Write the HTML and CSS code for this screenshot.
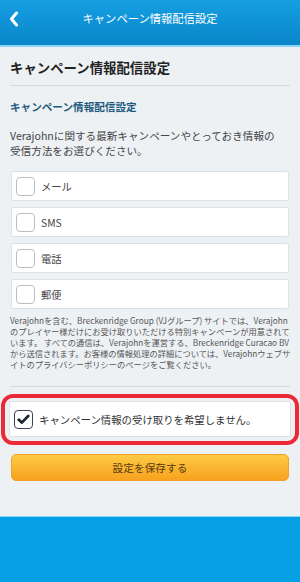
FILE: index.html
```html
<!DOCTYPE html>
<html lang="ja">
<head>
<meta charset="utf-8">
<title>キャンペーン情報配信設定</title>
<link rel="stylesheet" href="styles.css">
</head>
<body>
<header class="topbar">
  <a class="back" href="#" aria-label="戻る">
    <svg width="10" height="16" viewBox="0 0 10 16"><path d="M7.5 2 L2.5 8 L7.5 14" fill="none" stroke="#fff" stroke-width="3" stroke-linecap="round" stroke-linejoin="round"/></svg>
  </a>
  <h1 class="topbar-title">キャンペーン情報配信設定</h1>
</header>
<main class="content">
  <h2 class="page-title">キャンペーン情報配信設定</h2>
  <section class="settings">
    <h3 class="sub-title">キャンペーン情報配信設定</h3>
    <p class="lead">Verajohnに関する最新キャンペーンやとっておき情報の<br>受信方法をお選びください。</p>
    <ul class="options">
      <li class="option"><span class="cb"></span><span class="label">メール</span></li>
      <li class="option"><span class="cb"></span><span class="label">SMS</span></li>
      <li class="option"><span class="cb"></span><span class="label">電話</span></li>
      <li class="option"><span class="cb"></span><span class="label">郵便</span></li>
    </ul>
    <p class="note">Verajohnを含む、Breckenridge Group (VJグループ) サイトでは、Verajohn<br>のプレイヤー様だけにお受け取りいただける特別キャンペーンが用意されて<br>います。 すべての通信は、Verajohnを運営する、Breckenridge Curacao BV<br>から送信されます。お客様の情報処理の詳細については、Verajohnウェブサ<br>イトのプライバシーポリシーのページをご覧ください。</p>
    <div class="optout-wrap">
      <div class="option optout">
        <span class="cb checked">
          <svg width="13" height="11" viewBox="0 0 13 11"><path d="M1.8 5.8 L4.8 8.6 L11.2 2" fill="none" stroke="#1b2733" stroke-width="2.8" stroke-linecap="round" stroke-linejoin="round"/></svg>
        </span>
        <span class="label">キャンペーン情報の受け取りを希望しません。</span>
      </div>
    </div>
    <button class="save" type="button">設定を保存する</button>
  </section>
</main>
<footer class="footer"></footer>
</body>
</html>
```
FILE: styles.css
```css
* { box-sizing: border-box; }
html, body { margin: 0; padding: 0; }
body {
  width: 300px;
  min-height: 582px;
  display: flex;
  flex-direction: column;
  background: #eef1f4;
  font-family: "Noto Sans CJK JP", "Noto Sans", sans-serif;
  color: #444;
}
.topbar {
  height: 47px;
  background: linear-gradient(#159fe1, #0a86ca);
  border-bottom: 2px solid #8ad4f5;
  display: flex;
  align-items: flex-start;
  justify-content: center;
  position: relative;
}
.back {
  position: absolute;
  left: 9px;
  top: 11px;
  display: flex;
}
.topbar-title {
  margin: 0;
  line-height: 36px;
  font-size: 11.3px;
  font-weight: 400;
  color: #fff;
}
.content {
  flex: 1;
  padding: 0 10px;
}
.page-title {
  margin: 0;
  padding: 10px 0 8px;
  line-height: 20px;
  font-size: 13.4px;
  font-weight: 700;
  color: #222;
  border-bottom: 1px solid #d3d8dc;
}
.settings {
  display: flex;
  flex-direction: column;
}
.sub-title {
  margin: 13px 0 0;
  line-height: 16px;
  font-size: 10.6px;
  font-weight: 700;
  color: #1f5b80;
}
.lead {
  margin: 13px 0 0;
  line-height: 15px;
  font-size: 10.6px;
  color: #444;
  white-space: nowrap;
}
.options {
  list-style: none;
  margin: 13px 0 0;
  padding: 0;
  display: flex;
  flex-direction: column;
  gap: 6px;
}
.option {
  height: 30px;
  margin: 0 1px;
  background: #fff;
  border: 1px solid #dde2e6;
  border-radius: 2px;
  display: flex;
  align-items: center;
  gap: 6px;
  padding-left: 4px;
}
.cb {
  width: 19px;
  height: 19px;
  border: 1px solid #b9bfc5;
  border-radius: 4px;
  background: #fff;
  display: flex;
  align-items: center;
  justify-content: center;
  flex: none;
}
.cb.checked { border: 1px solid #3b4450; }
.label {
  font-size: 10.3px;
  color: #444;
}
.note {
  margin: 6px 0 0;
  line-height: 11.1px;
  font-size: 8.25px;
  color: #555;
  white-space: nowrap;
  padding-bottom: 16px;
  border-bottom: 1px solid #d3d8dc;
}
.optout-wrap {
  position: relative;
  margin-top: 14px;
}
.optout {
  height: 36px;
  margin: 0 -1px;
}
.optout::after {
  content: "";
  position: absolute;
  left: -9px;
  right: -9px;
  top: -7px;
  bottom: -8px;
  border: 4.5px solid #ea2b37;
  border-radius: 12px;
  pointer-events: none;
}
.optout .label { font-size: 10.4px; color: #333; }
.save {
  margin: 17px 1px 0;
  height: 27px;
  border: 1px solid #efa02a;
  border-radius: 5px;
  background: linear-gradient(#fdca44, #f7a21f);
  font-family: inherit;
  font-size: 10.7px;
  color: #5a3a12;
  padding: 0;
}
.footer {
  height: 66px;
  background: #049fe4;
  border-top: 1px solid #86d9f7;
  margin-top: 33px;
}
```
